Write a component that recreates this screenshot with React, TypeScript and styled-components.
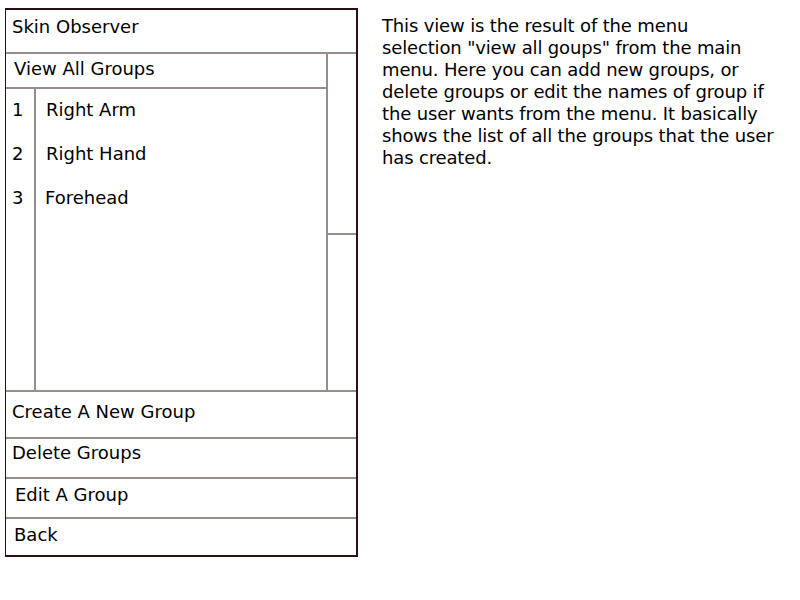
import React from "react";
import styled, { createGlobalStyle } from "styled-components";

const Global = createGlobalStyle`
  html, body { margin: 0; padding: 0; background: #fff; }
  body { font-family: "DejaVu Sans", "Liberation Sans", sans-serif; color: #000; }
`;

const Page = styled.div`
  display: flex;
  align-items: flex-start;
  width: 800px;
  height: 600px;
`;

const Phone = styled.div`
  margin: 8px 0 0 5px;
  width: 350px;
  border-style: solid;
  border-color: #2a1010;
  border-width: 2px 2px 2px 1px;
  display: flex;
  flex-direction: column;
`;

const Row = styled.div<{ $h: number; $pt: number; $pl: number; $line?: boolean }>`
  height: ${(p) => p.$h}px;
  padding: ${(p) => p.$pt}px 0 0 ${(p) => p.$pl}px;
  box-sizing: border-box;
  font-size: 18px;
  line-height: 22px;
  border-bottom: ${(p) => (p.$line ? "2px solid #978d8b" : "none")};
  white-space: nowrap;
`;

const Middle = styled.div`
  display: flex;
  height: 338px;
  border-bottom: 2px solid #978d8b;
  box-sizing: border-box;
`;

const MainCol = styled.div`
  flex: 1;
  display: flex;
  flex-direction: column;
`;

const ScrollTrack = styled.div`
  width: 28px;
  border-left: 2px solid #978d8b;
`;

const Thumb = styled.div`
  height: 179px;
  border-bottom: 2px solid #978d8b;
  margin-left: -2px;
`;

const List = styled.div`
  flex: 1;
  display: flex;
`;

const NumCol = styled.div`
  width: 30px;
  border-right: 2px solid #978d8b;
  padding: 10px 0 0 6px;
  box-sizing: border-box;
  display: flex;
  flex-direction: column;
  gap: 22px;
  font-size: 18px;
  line-height: 22px;
`;

const NameCol = styled.div`
  flex: 1;
  padding: 10px 0 0 10px;
  display: flex;
  flex-direction: column;
  gap: 22px;
  font-size: 18px;
  line-height: 22px;
`;

const Name = styled.div<{ $dx?: number }>`
  margin-left: ${(p) => p.$dx ?? 0}px;
`;

const Description = styled.p`
  margin: 15px 0 0 24px;
  width: 410px;
  font-size: 18px;
  line-height: 22px;
  letter-spacing: -0.15px;
  white-space: pre-line;
`;

const groups = ["Right Arm", "Right Hand", "Forehead"];

const descText = `This view is the result of the menu
selection "view all goups" from the main
menu. Here you can add new groups, or
delete groups or edit the names of group if
the user wants from the menu. It basically
shows the list of all the groups that the user
has created.`;

export default function App() {
  return (
    <>
      <Global />
      <Page>
        <Phone>
          <Row $h={44} $pt={6} $pl={6} $line>
            Skin Observer
          </Row>
          <Middle>
            <MainCol>
              <Row $h={35} $pt={4} $pl={8} $line>
                View All Groups
              </Row>
              <List>
                <NumCol>
                  {groups.map((_, i) => (
                    <div key={i}>{i + 1}</div>
                  ))}
                </NumCol>
                <NameCol>
                  {groups.map((g, i) => (
                    <Name key={g} $dx={i === 2 ? -1 : 0}>
                      {g}
                    </Name>
                  ))}
                </NameCol>
              </List>
            </MainCol>
            <ScrollTrack>
              <Thumb />
            </ScrollTrack>
          </Middle>
          <Row $h={47} $pt={9} $pl={6} $line>
            Create A New Group
          </Row>
          <Row $h={40} $pt={3} $pl={6} $line>
            Delete Groups
          </Row>
          <Row $h={40} $pt={5} $pl={9} $line>
            Edit A Group
          </Row>
          <Row $h={36} $pt={5} $pl={8}>
            Back
          </Row>
        </Phone>
        <Description>{descText}</Description>
      </Page>
    </>
  );
}
